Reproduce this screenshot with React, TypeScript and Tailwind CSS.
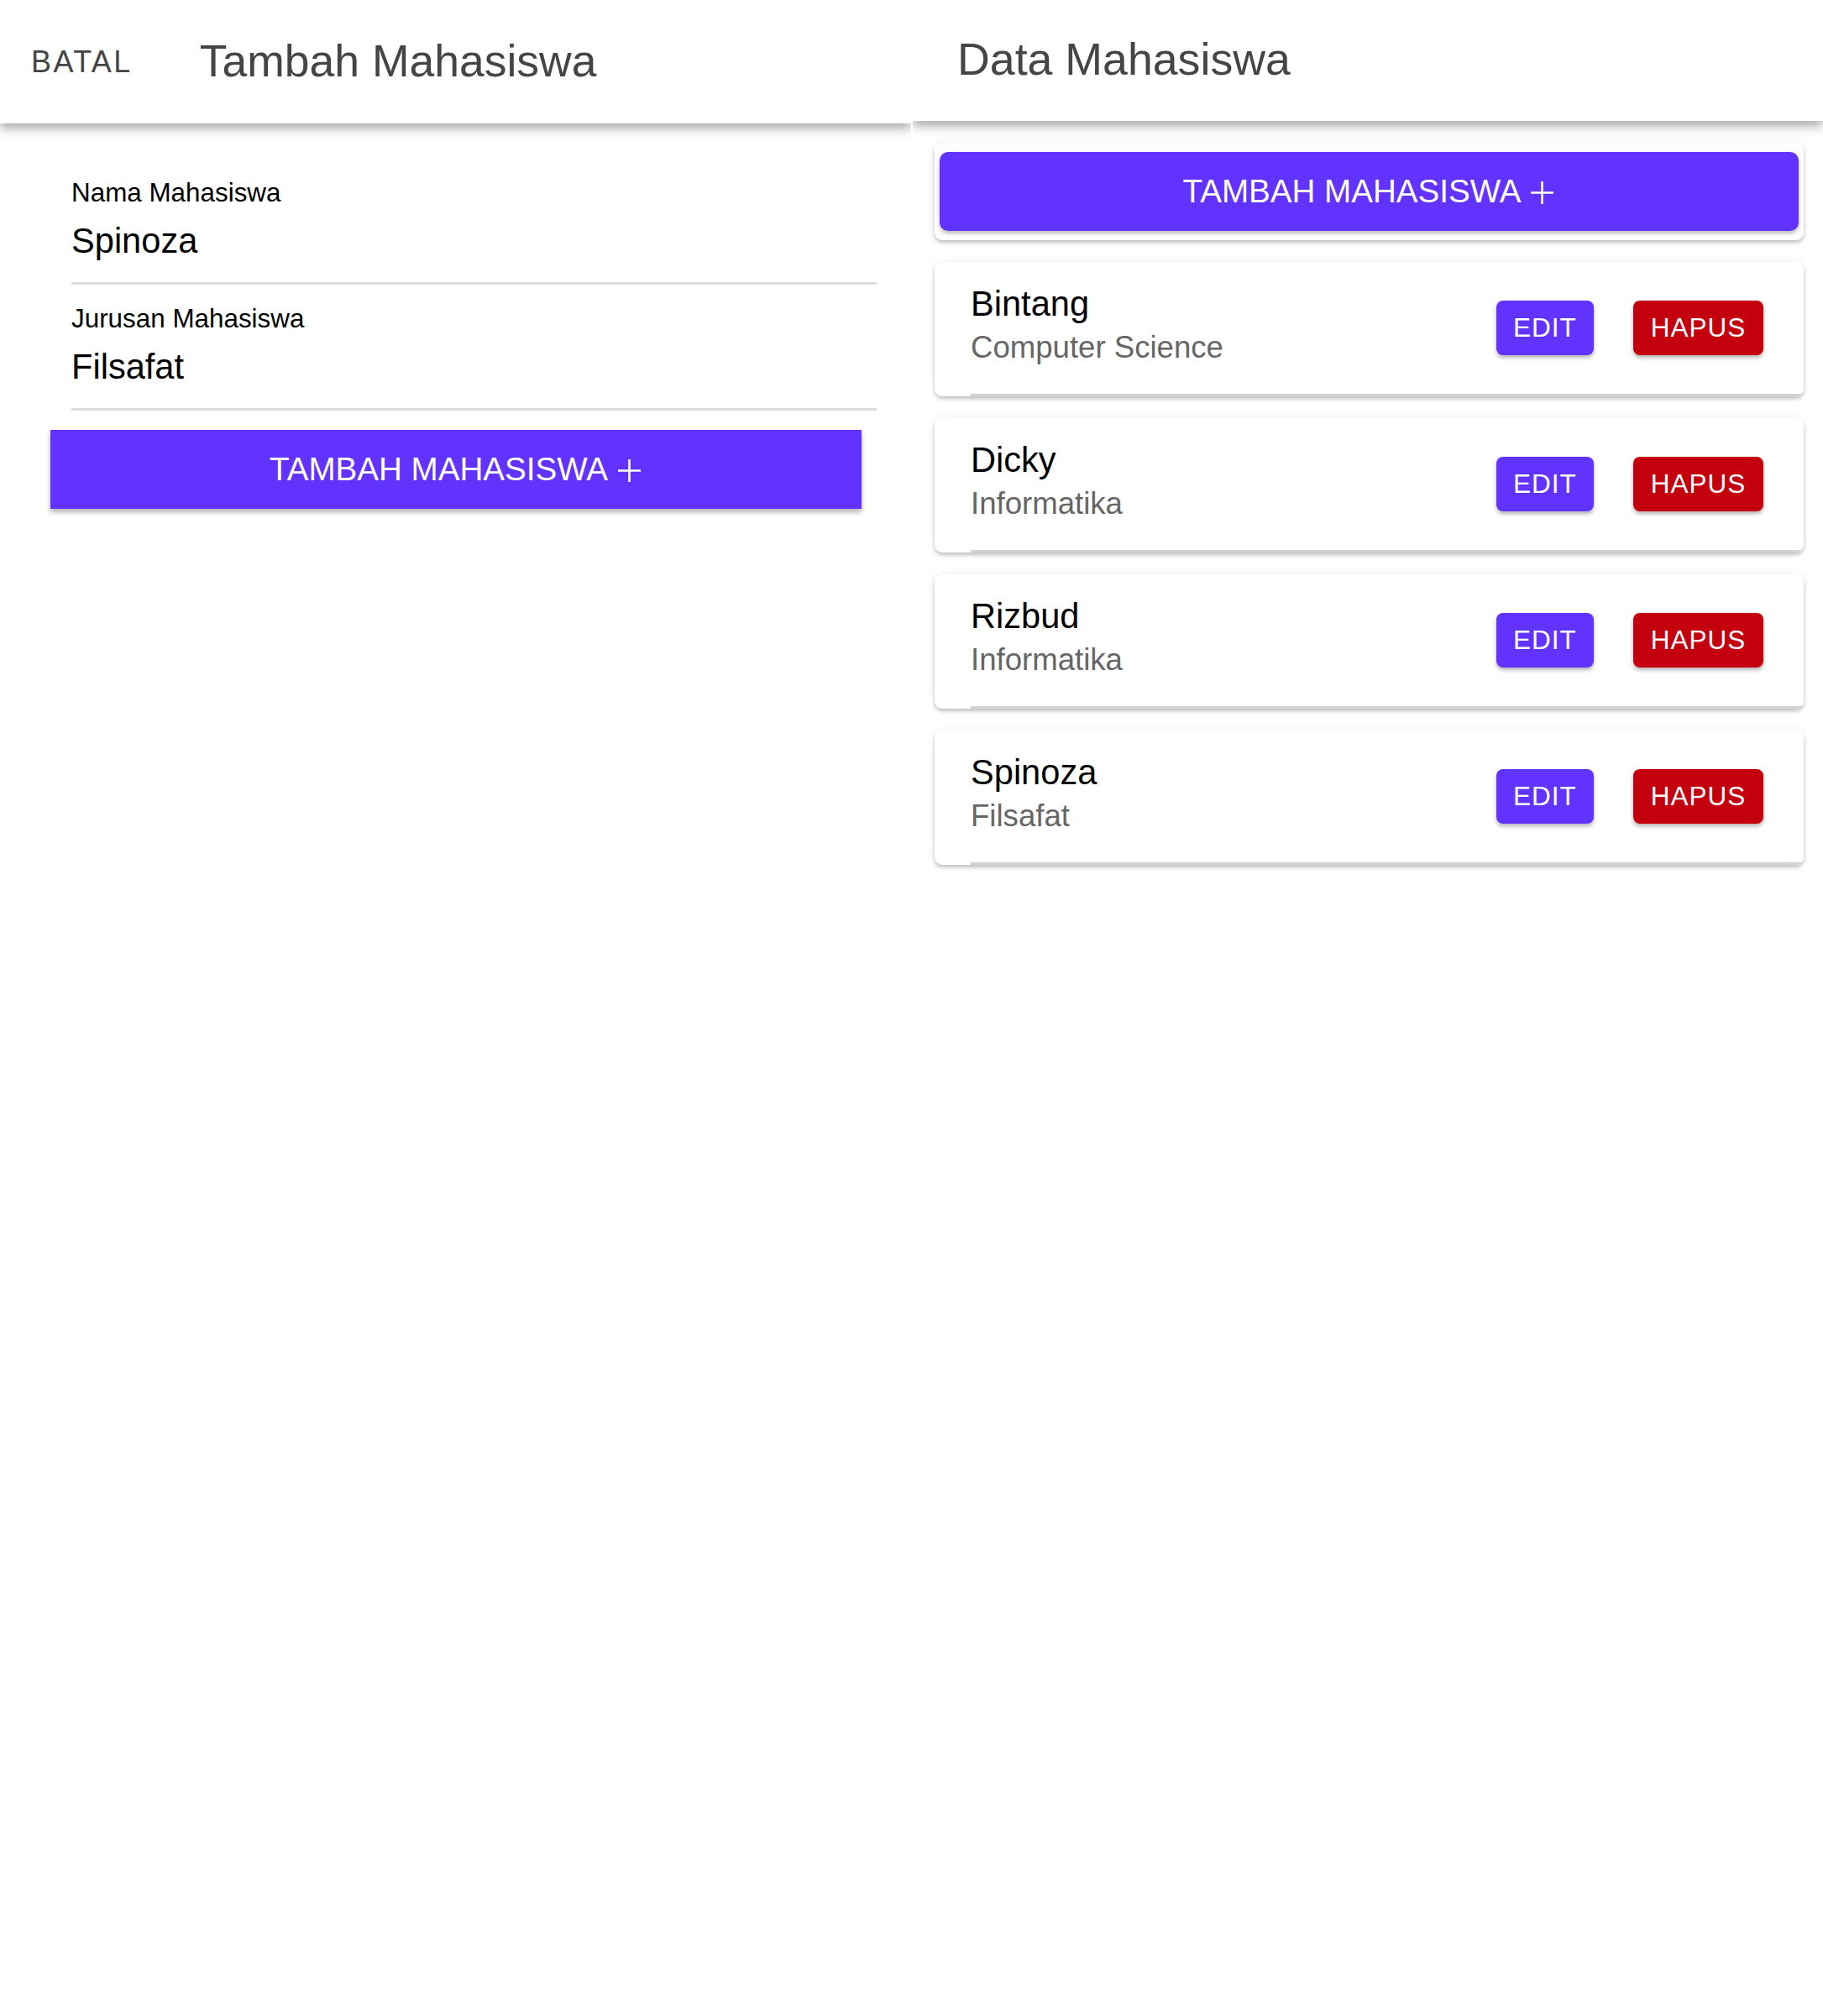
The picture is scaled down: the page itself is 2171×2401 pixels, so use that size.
import React from 'react';

type Mahasiswa = { id: number; nama: string; jurusan: string };

const data: Mahasiswa[] = [
  { id: 1, nama: 'Bintang', jurusan: 'Computer Science' },
  { id: 2, nama: 'Dicky', jurusan: 'Informatika' },
  { id: 3, nama: 'Rizbud', jurusan: 'Informatika' },
  { id: 4, nama: 'Spinoza', jurusan: 'Filsafat' },
];

function PlusIcon() {
  return (
    <svg width="31" height="31" viewBox="0 0 31 31" className="ml-[10px] mt-[2px]">
      <path d="M15.5 2 V29 M2 15.5 H29" stroke="white" strokeWidth="2.6" fill="none" />
    </svg>
  );
}

function Field({ label, value }: { label: string; value: string }) {
  return (
    <div className="flex flex-col">
      <div className="h-[36px] text-[31.4px] leading-[36px] text-black">{label}</div>
      <div className="mt-[14px] h-[50px] text-[41.6px] leading-[50px] text-black">{value}</div>
      <div className="mt-[24px] h-[3px] bg-[#dddddd]" />
    </div>
  );
}

function FormPanel() {
  return (
    <div className="flex w-[1085px] flex-col">
      {/* Appbar */}
      <div className="relative z-10 flex h-[147px] items-center bg-white shadow-[0_6px_12px_rgba(0,0,0,0.34)] [clip-path:inset(0_0_-40px_0)]">
        <span className="ml-[37px] text-[36px] tracking-[2.4px] text-[#454545]">BATAL</span>
        <span className="ml-[80px] text-[53.5px] text-[#454545]">Tambah Mahasiswa</span>
      </div>

      <div className="flex flex-col pt-[65px]">
        <div className="flex flex-col gap-[23px] pl-[85px] pr-[41px]">
          <Field label="Nama Mahasiswa" value="Spinoza" />
          <Field label="Jurusan Mahasiswa" value="Filsafat" />
        </div>
        <button className="ml-[60px] mt-[23px] flex h-[94px] w-[966px] items-center justify-center bg-[#6233ff] text-[38.6px] text-white shadow-[0_4px_6px_rgba(0,0,0,0.3)]">
          TAMBAH MAHASISWA
          <PlusIcon />
        </button>
      </div>
    </div>
  );
}

function StudentCard({ m }: { m: Mahasiswa }) {
  return (
    <div className="flex h-[160px] flex-col overflow-hidden rounded-[9px] bg-white shadow-[0_3px_4px_rgba(0,0,0,0.22),0_0_14px_rgba(0,0,0,0.06)]">
      <div className="flex flex-1 items-start pl-[43px] pr-[48px]">
        <div className="flex flex-1 flex-col pt-[26px]">
          <div className="text-[41.6px] leading-[48px] text-black">{m.nama}</div>
          <div className="mt-[6px] text-[36.6px] leading-[44px] text-[#666666]">{m.jurusan}</div>
        </div>
        <div className="mt-[46px] flex gap-[47px]">
          <button className="flex h-[65px] w-[116px] items-center justify-center rounded-[8px] bg-[#6233ff] text-[31.5px] tracking-[1px] text-white shadow-[0_3px_5px_rgba(0,0,0,0.3)]">
            EDIT
          </button>
          <button className="flex h-[65px] w-[155px] items-center justify-center rounded-[8px] bg-[#c4000f] text-[31.5px] tracking-[1px] text-white shadow-[0_3px_5px_rgba(0,0,0,0.3)]">
            HAPUS
          </button>
        </div>
      </div>
      <div className="ml-[43px] h-[3px] bg-[#d2d2d2]" />
    </div>
  );
}

function ListPanel() {
  return (
    <div className="ml-[2px] flex flex-1 flex-col">
      <div className="relative z-10 flex h-[144px] items-center bg-white shadow-[0_6px_12px_rgba(0,0,0,0.34)] [clip-path:inset(0_0_-40px_0)]">
        <span className="mb-[4px] ml-[53px] text-[53.7px] text-[#454545]">Data Mahasiswa</span>
      </div>

      <div className="flex flex-col gap-[26px] pl-[26px] pr-[23px] pt-[26px]">
        <div className="rounded-[9px] bg-white px-[6px] py-[11px] shadow-[0_3px_4px_rgba(0,0,0,0.22),0_0_14px_rgba(0,0,0,0.06)]">
          <button className="flex h-[94px] w-full items-center justify-center rounded-[10px] bg-[#6233ff] text-[38.6px] text-white shadow-[0_3px_5px_rgba(0,0,0,0.28)]">
            TAMBAH MAHASISWA
            <PlusIcon />
          </button>
        </div>
        {data.map((m) => (
          <StudentCard key={m.id} m={m} />
        ))}
      </div>
    </div>
  );
}

export default function App() {
  return (
    <div className="flex min-h-[2401px] w-[2171px] items-start bg-white font-['Liberation_Sans',Arial,sans-serif]">
      <FormPanel />
      <ListPanel />
    </div>
  );
}
